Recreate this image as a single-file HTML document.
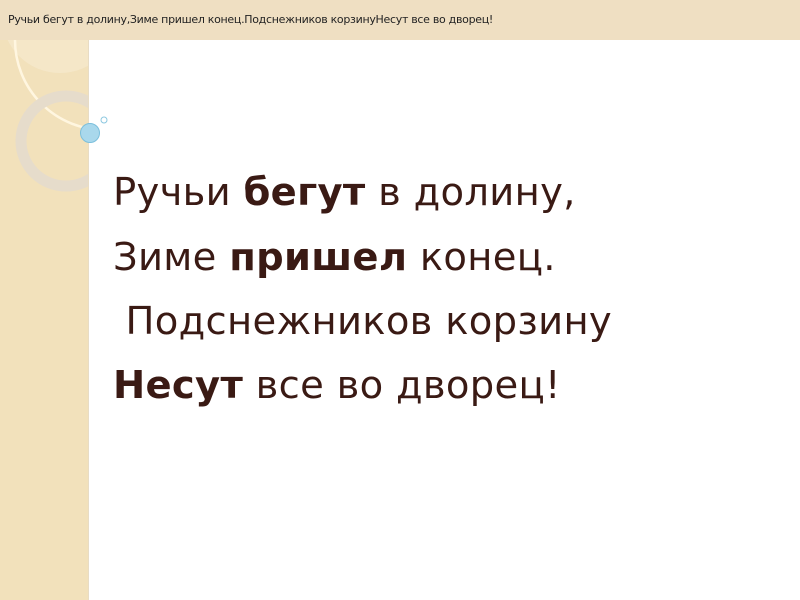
<!DOCTYPE html>
<html><head><meta charset="utf-8"><style>
body{margin:0;width:800px;height:600px;overflow:hidden;background:#fff;position:relative;font-family:"DejaVu Sans","Liberation Sans",sans-serif}
.top{position:absolute;left:0;top:0;width:800px;height:40px;background:#efdfc2;}
.top span{position:absolute;left:8px;top:13px;font-size:11px;color:#222;letter-spacing:-0.3px}
.side{position:absolute;left:0;top:40px;width:88px;height:560px;background:#f2e1bb;border-right:1px solid #e8dcc4}
.txt{position:absolute;left:113px;color:#3a1a14;font-size:38.5px;line-height:38px;white-space:nowrap;letter-spacing:0.3px}
b{font-weight:bold}
</style></head><body>
<div class="top"><span>Ручьи бегут в долину,Зиме пришел конец.Подснежников корзинуНесут все во дворец!</span></div>
<div class="side"></div>
<svg style="position:absolute;left:0;top:40px" width="120" height="200">
<defs><clipPath id="c"><rect x="0" y="0" width="88" height="200"/></clipPath></defs>
<g clip-path="url(#c)">
<circle cx="60" cy="-25" r="58" fill="#f5e8cc" opacity="0.8"/>
<circle cx="105" cy="0" r="90" fill="none" stroke="#fff6e0" stroke-width="2.5"/>
<circle cx="66" cy="101" r="45" fill="none" stroke="#e6dccb" stroke-width="11"/>
</g>
<circle cx="90" cy="93" r="9.5" fill="#a9d8ec" stroke="#7bbfdc" stroke-width="1"/>
<circle cx="104" cy="80" r="3" fill="#fff" stroke="#8cc8e0" stroke-width="1"/>
</svg>
<div class="txt" style="top:174px">Ручьи <b>бегут</b> в долину,</div>
<div class="txt" style="top:239px">Зиме <b>пришел</b> конец.</div>
<div class="txt" style="top:303px">&nbsp;Подснежников корзину</div>
<div class="txt" style="top:367px"><b>Несут</b> все во дворец!</div>
</body></html>
